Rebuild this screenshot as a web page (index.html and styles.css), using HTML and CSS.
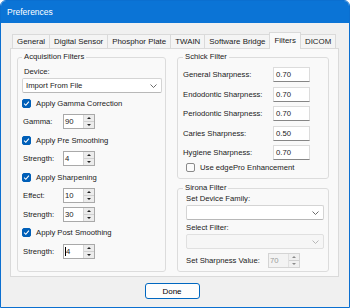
FILE: index.html
```html
<!DOCTYPE html>
<html>
  <head>
    <meta charset="UTF-8">
    <title>Preferences</title>
    <link rel="stylesheet" href="styles.css">
  </head>
  <body>
    <div class="window">
      <div class="titlebar">Preferences</div>
      <div class="content">
        <div class="tabs">
          <div class="tab">General</div>
          <div class="tab">Digital Sensor</div>
          <div class="tab">Phosphor Plate</div>
          <div class="tab">TWAIN</div>
          <div class="tab">Software Bridge</div>
          <div class="tab selected">Filters</div>
          <div class="tab">DICOM</div>
        </div>

        <div class="panel">
          <!-- left column -->
          <fieldset class="group acq">
            <legend>Acquisition Filters</legend>
            <div class="label-line">Device:</div>
            <div class="combo">
              <span>Import From File</span>
              <svg class="chev" width="7" height="4" viewBox="0 0 7 4"><polyline points="0.5,0.5 3.5,3.5 6.5,0.5" /></svg>
            </div>

            <div class="row">
              <span class="check on"><svg width="7" height="7" viewBox="0 0 7 7"><polyline points="1.1,3.7 2.8,5.3 5.9,1.7" /></svg></span>
              Apply Gamma Correction
            </div>
            <div class="row">
              <span class="field-label">Gamma:</span>
              <div class="spin"><span class="spin-text">90</span><span class="spin-btns"><span class="sb"><i class="up"></i></span><span class="sb"><i class="down"></i></span></span></div>
            </div>

            <div class="row">
              <span class="check on"><svg width="7" height="7" viewBox="0 0 7 7"><polyline points="1.1,3.7 2.8,5.3 5.9,1.7" /></svg></span>
              Apply Pre Smoothing
            </div>
            <div class="row">
              <span class="field-label">Strength:</span>
              <div class="spin"><span class="spin-text">4</span><span class="spin-btns"><span class="sb"><i class="up"></i></span><span class="sb"><i class="down"></i></span></span></div>
            </div>

            <div class="row">
              <span class="check on"><svg width="7" height="7" viewBox="0 0 7 7"><polyline points="1.1,3.7 2.8,5.3 5.9,1.7" /></svg></span>
              Apply Sharpening
            </div>
            <div class="row">
              <span class="field-label">Effect:</span>
              <div class="spin"><span class="spin-text">10</span><span class="spin-btns"><span class="sb"><i class="up"></i></span><span class="sb"><i class="down"></i></span></span></div>
            </div>
            <div class="row">
              <span class="field-label">Strength:</span>
              <div class="spin"><span class="spin-text">30</span><span class="spin-btns"><span class="sb"><i class="up"></i></span><span class="sb"><i class="down"></i></span></span></div>
            </div>

            <div class="row">
              <span class="check on"><svg width="7" height="7" viewBox="0 0 7 7"><polyline points="1.1,3.7 2.8,5.3 5.9,1.7" /></svg></span>
              Apply Post Smoothing
            </div>
            <div class="row">
              <span class="field-label">Strength:</span>
              <div class="spin"><span class="spin-text"><b class="caret"></b>4</span><span class="spin-btns"><span class="sb"><i class="up"></i></span><span class="sb"><i class="down"></i></span></span></div>
            </div>
          </fieldset>

          <!-- right column -->
          <div class="right-col">
            <fieldset class="group schick">
              <legend>Schick Filter</legend>
              <div class="srow"><span class="slabel">General Sharpness:</span><span class="tbox">0.70</span></div>
              <div class="srow"><span class="slabel">Endodontic Sharpness:</span><span class="tbox">0.70</span></div>
              <div class="srow"><span class="slabel">Periodontic Sharpness:</span><span class="tbox">0.70</span></div>
              <div class="srow"><span class="slabel">Caries Sharpness:</span><span class="tbox">0.50</span></div>
              <div class="srow"><span class="slabel">Hygiene Sharpness:</span><span class="tbox">0.70</span></div>
              <div class="crow"><span class="check"></span>Use edgePro Enhancement</div>
            </fieldset>

            <fieldset class="group sirona">
              <legend>Sirona Filter</legend>
              <div class="label-line">Set Device Family:</div>
              <div class="combo">
                <span></span>
                <svg class="chev" width="7" height="4" viewBox="0 0 7 4"><polyline points="0.5,0.5 3.5,3.5 6.5,0.5" /></svg>
              </div>
              <div class="label-line gap">Select Filter:</div>
              <div class="combo disabled">
                <span></span>
                <svg class="chev" width="7" height="4" viewBox="0 0 7 4"><polyline points="0.5,0.5 3.5,3.5 6.5,0.5" /></svg>
              </div>
              <div class="sharp-row">
                <span class="sharp-label">Set Sharpness Value:</span>
                <div class="spin disabled"><span class="spin-text">70</span><span class="spin-btns"><span class="sb"><i class="up"></i></span><span class="sb"><i class="down"></i></span></span></div>
              </div>
            </fieldset>
          </div>
        </div>

        <div class="footer">
          <button class="btn">Done</button>
        </div>
      </div>
    </div>
  </body>
</html>
```

FILE: styles.css
```css
body { margin: 0; background: #fff; font-family: "Liberation Sans", Arial, sans-serif; font-size: 7.7px; color: #1a1a1a; }
.window { width: 350px; height: 308px; box-sizing: border-box; border: 1px solid #0b6fd0; border-radius: 6px 6px 0 0; background: #f0f0f0; overflow: hidden; }
.titlebar { height: 22px; line-height: 22px; background: #0b74d6; color: #fff; font-size: 8.5px; padding-left: 6px; }

.content { padding: 0 10px 0 9px; }

/* tabs */
.tabs { height: 25px; display: flex; align-items: flex-end; padding-left: 2px; }
.tab { height: 13px; line-height: 13px; padding: 0 4px; font-size: 7.9px; background: #f4f4f4; border: 1px solid #dadada; border-bottom: none; margin-right: -1px; }
.tab.selected { height: 16px; line-height: 15px; background: #f9f9f9; margin-bottom: -1px; position: relative; z-index: 1; }

.panel { height: 229px; box-sizing: border-box; border: 1px solid #dadada; background: #f9f9f9; display: flex; gap: 11px; padding: 3px 9px 4px 6px; }

/* group boxes */
.group { margin: 0; min-width: 0; box-sizing: border-box; border: 1px solid #dcdcdc; border-radius: 3px; }
.group legend { padding: 0 2px; line-height: 10px; }
.acq { width: 149px; padding: 4px 3px 0 4px; }
.right-col { width: 152px; display: flex; flex-direction: column; gap: 4px; }
.schick { height: 127px; padding: 5px 4px 0 5px; }
.sirona { flex: 1; padding: 0 4px 0 8px; }
.sirona legend { margin-left: -3px; }

.label-line { line-height: 12px; padding-left: 2px; }
.sirona .label-line { padding-left: 0; }
.label-line.gap { margin-top: 2px; }

/* combo box */
.combo { height: 15px; box-sizing: border-box; display: flex; align-items: center; justify-content: space-between; padding: 0 4px 0 3px; background: #fff; border: 1px solid #d4d4d4; border-bottom-color: #b8b8b8; border-radius: 2px; margin-bottom: 1px; }
.chev polyline { fill: none; stroke: #5a5a5a; stroke-width: 0.9; }
.combo.disabled { background: #f6f6f6; border-color: #e0e0e0; }
.combo.disabled .chev polyline { stroke: #b0b0b0; }

/* rows */
.row { height: 18.5px; display: flex; align-items: center; }
.check { width: 9px; height: 9px; box-sizing: border-box; border: 1px solid #8a8a8a; border-radius: 2px; background: #fbfbfb; margin-right: 5px; display: flex; align-items: center; justify-content: center; }
.check.on { background: #005fb8; border-color: #005fb8; }
.check svg polyline { fill: none; stroke: #fff; stroke-width: 1.1; }
.field-label { width: 40px; padding-left: 1px; }

/* numeric up/down */
.spin { width: 32px; height: 15px; box-sizing: border-box; display: flex; border: 1px solid #a9a9a9; background: #fff; }
.spin-text { flex: 1; line-height: 13px; padding-left: 1px; display: flex; align-items: center; }
.caret { width: 1px; height: 9px; background: #000; }
.spin-btns { width: 10px; display: flex; flex-direction: column; border-left: 1px solid #d6d6d6; background: #ececec; }
.sb { flex: 1; display: flex; align-items: center; justify-content: center; }
.sb + .sb { border-top: 1px solid #d0d0d0; }
.up { width: 0; height: 0; border-left: 2.5px solid transparent; border-right: 2.5px solid transparent; border-bottom: 2.5px solid #222; }
.down { width: 0; height: 0; border-left: 2.5px solid transparent; border-right: 2.5px solid transparent; border-top: 2.5px solid #222; }
.spin.disabled { border-color: #d4d4d4; background: #f3f3f3; color: #9a9a9a; }
.spin.disabled .spin-btns { background: #f0f0f0; border-left-color: #e0e0e0; }
.spin.disabled .up { border-bottom-color: #8a8a8a; }
.spin.disabled .down { border-top-color: #8a8a8a; }

/* schick */
.srow { height: 19.6px; display: flex; align-items: flex-start; }
.slabel { width: 90px; line-height: 15px; }
.tbox { width: 37px; height: 15px; box-sizing: border-box; line-height: 13px; padding-left: 2px; background: #fff; border: 1px solid #dcdcdc; border-bottom-color: #868686; }
.crow { height: 10px; display: flex; align-items: center; padding-left: 3px; margin-top: -2px; }

/* sirona */
.sharp-row { display: flex; align-items: center; margin-top: 4px; }
.sharp-label { width: 82px; }

.footer { display: flex; justify-content: center; padding: 6px 5px 0 0; }
.btn { width: 55px; height: 16px; box-sizing: border-box; padding: 0; font-family: "Liberation Sans", Arial, sans-serif; font-size: 8px; color: #000; background: #fdfdfd; border: 1px solid #0067c0; border-radius: 3px; }
```
